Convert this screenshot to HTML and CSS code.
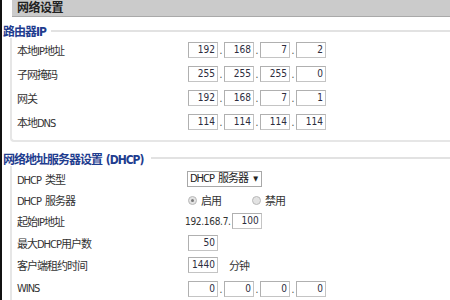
FILE: index.html
```html
<!DOCTYPE html>
<html lang="zh">
<head>
<meta charset="utf-8">
<link rel="stylesheet" href="styles.css">
</head>
<body>
<div class="page">
  <div class="header">网络设置</div>

  <div class="legend"><span class="legend-text">路由器IP</span><span class="legend-line"></span></div>
  <div class="group closed">
    <div class="row"><span class="label">本地IP地址</span><div class="ip"><span class="box">192</span><span class="dot">.</span><span class="box">168</span><span class="dot">.</span><span class="box">7</span><span class="dot">.</span><span class="box">2</span></div></div>
    <div class="row"><span class="label">子网掩码</span><div class="ip"><span class="box">255</span><span class="dot">.</span><span class="box">255</span><span class="dot">.</span><span class="box">255</span><span class="dot">.</span><span class="box">0</span></div></div>
    <div class="row"><span class="label">网关</span><div class="ip"><span class="box">192</span><span class="dot">.</span><span class="box">168</span><span class="dot">.</span><span class="box">7</span><span class="dot">.</span><span class="box">1</span></div></div>
    <div class="row"><span class="label">本地DNS</span><div class="ip"><span class="box">114</span><span class="dot">.</span><span class="box">114</span><span class="dot">.</span><span class="box">114</span><span class="dot">.</span><span class="box">114</span></div></div>
  </div>

  <div class="legend second"><span class="legend-text">网络地址服务器设置 (DHCP)</span><span class="legend-line wide"></span></div>
  <div class="group open">
    <div class="row small"><span class="label">DHCP 类型</span><div class="select"><span>DHCP 服务器</span><span class="arrow">▼</span></div></div>
    <div class="row small short"><span class="label">DHCP 服务器</span><div class="radios"><span class="radio checked"></span><span class="radio-text first">启用</span><span class="radio"></span><span class="radio-text">禁用</span></div></div>
    <div class="row small"><span class="label">起始IP地址</span><div class="field"><span class="prefix">192.168.7.</span><span class="box">100</span></div></div>
    <div class="row small"><span class="label">最大DHCP用户数</span><div class="field"><span class="box">50</span></div></div>
    <div class="row small"><span class="label">客户端租约时间</span><div class="field"><span class="box">1440</span><span class="unit">分钟</span></div></div>
    <div class="row small tall"><span class="label">WINS</span><div class="ip"><span class="box">0</span><span class="dot">.</span><span class="box">0</span><span class="dot">.</span><span class="box">0</span><span class="dot">.</span><span class="box">0</span></div></div>
  </div>
</div>
</body>
</html>
```

FILE: styles.css
```css
* { box-sizing: border-box; }
html, body { margin: 0; padding: 0; background: #fff; }
body {
  width: 450px;
  height: 300px;
  overflow: hidden;
  font-family: "DejaVu Sans Condensed", "Noto Sans CJK SC", sans-serif;
  font-size: 11px;
  color: #333;
}
.page {
  border-left: 2px solid #111;
  padding-left: 1px;
  height: 300px;
}
.header {
  margin-left: 9px;
  height: 17px;
  background: #cbcbcb;
  border-bottom: 1px solid #a9a9a9;
  padding-left: 5px;
  font-weight: bold;
  font-size: 12px;
  line-height: 16px;
  color: #222;
  letter-spacing: -0.5px;
}
.legend {
  display: flex;
  align-items: center;
  height: 16px;
  margin-top: 5px;
}
.legend.second { margin-top: 8px; }
.legend-text {
  color: #1f3d8f;
  font-weight: bold;
  font-size: 12px;
  letter-spacing: -1px;
  word-spacing: 1px;
  white-space: nowrap;
}
.legend-line {
  flex: 1;
  height: 2px;
  background: #e2e2e2;
  margin-left: 5px;
  margin-top: 2px;
}
.legend-line.wide { margin-left: 8px; margin-top: 0; }
.group {
  margin-left: 7px;
  border-left: 2px solid #e6e6e6;
  padding-left: 5px;
}
.group.closed {
  border-bottom: 2px solid #e6e6e6;
  border-bottom-left-radius: 4px;
  padding-bottom: 6px;
}
.group.open { padding-top: 2px; }
.row {
  display: flex;
  align-items: center;
  height: 24px;
}
.row.small { height: 22px; }
.row.short { height: 20px; }
.row.tall { height: 25px; }
.label {
  width: 171px;
  flex: none;
  letter-spacing: -1px;
  word-spacing: 2px;
  white-space: nowrap;
}
.ip, .field, .radios {
  display: flex;
  align-items: center;
}
.box {
  width: 30px;
  height: 16px;
  border: 1px solid #c4c4c4;
  border-top-color: #b0b0b0;
  border-left-color: #b0b0b0;
  background: #fff;
  text-align: right;
  padding-right: 2px;
  font-size: 10px;
  line-height: 14px;
  color: #2d2d3d;
}
.dot {
  width: 6px;
  height: 16px;
  text-align: center;
  font-size: 10px;
  line-height: 18px;
  color: #444;
}
.select {
  width: 75px;
  height: 16px;
  border: 1px solid #a8a8a8;
  margin-left: -1px;
  display: flex;
  align-items: center;
  justify-content: space-between;
  padding: 0 3px 0 2px;
  letter-spacing: -1px;
  word-spacing: 2px;
  line-height: 14px;
  color: #222;
}
.arrow {
  font-size: 7px;
  letter-spacing: 0;
  color: #222;
}
.radio {
  width: 9px;
  height: 9px;
  border-radius: 50%;
  border: 1px solid #b9b9b9;
  background: #e3e3e3;
  display: flex;
  align-items: center;
  justify-content: center;
}
.radio.checked::after {
  content: "";
  width: 3px;
  height: 3px;
  border-radius: 50%;
  background: #7a7a7a;
}
.radio-text {
  margin-left: 4px;
  letter-spacing: -1px;
}
.radio-text.first { margin-right: 31px; }
.prefix {
  font-size: 10px;
  margin-left: -3px;
  margin-right: 1px;
  letter-spacing: -0.3px;
}
.unit {
  margin-left: 11px;
  letter-spacing: -1px;
}
```
